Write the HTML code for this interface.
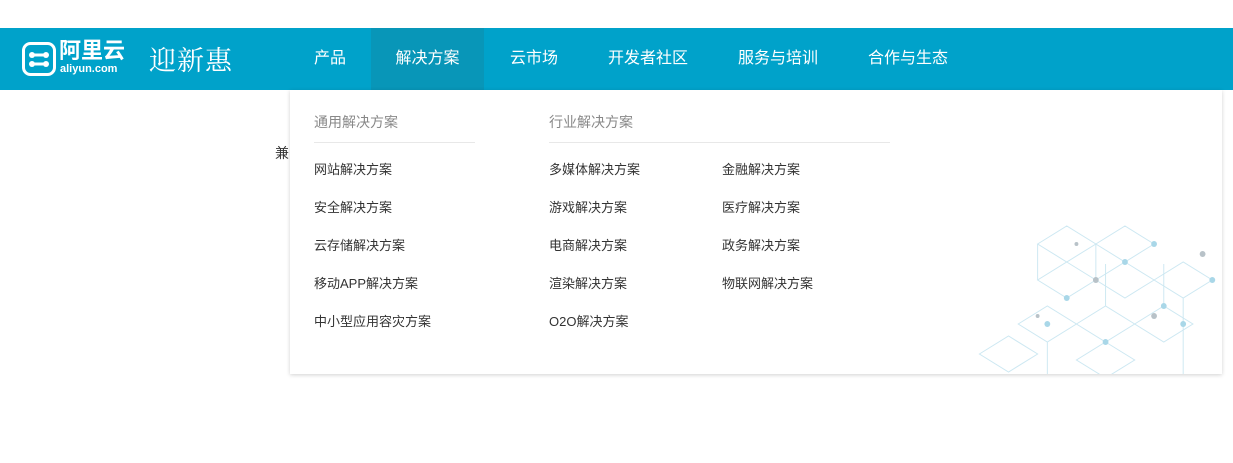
<!DOCTYPE html>
<html><head><meta charset="utf-8"><style>
*{margin:0;padding:0;box-sizing:border-box}
body{width:1233px;height:463px;background:#fff;position:relative;overflow:hidden;font-family:"Liberation Sans","Noto Sans CJK SC",sans-serif}
.bar{position:absolute;left:0;top:28px;width:1233px;height:62px;background:#00a2ca}
.nav{position:absolute;top:0;height:62px;line-height:62px;color:#fff;font-size:16px;text-align:center}
.act{background:#0896b8}
.dd{position:absolute;left:290px;top:90px;width:932px;height:284px;background:#fff;box-shadow:0 1px 4px rgba(0,0,0,.18)}
.h{position:absolute;top:22px;font-size:14px;color:#888}
.ln{position:absolute;top:52px;height:1px;background:#e8e8e8}
.it{position:absolute;font-size:13px;color:#333}
</style></head><body>
<div class="bar">
 <svg style="position:absolute;left:22px;top:14px" width="34" height="34" viewBox="0 0 34 34"><rect x="1.5" y="1.5" width="31" height="31" rx="7" fill="none" stroke="#fff" stroke-width="3"/><circle cx="10" cy="13" r="3" fill="#fff"/><circle cx="24" cy="13" r="3" fill="#fff"/><circle cx="10" cy="22" r="3" fill="#fff"/><circle cx="24" cy="22" r="3" fill="#fff"/><rect x="10" y="11.5" width="14" height="3" fill="#fff"/><rect x="10" y="20.5" width="14" height="3" fill="#fff"/></svg>
 <div style="position:absolute;left:59px;top:11px;color:#fff;font-size:22px;font-weight:bold;line-height:24px">阿里云</div>
 <div style="position:absolute;left:60px;top:35px;color:#fff;font-size:11px;font-weight:bold;line-height:12px">aliyun.com</div>
 <div style="position:absolute;left:149px;top:14px;color:#fff;font-size:27px;line-height:34px;letter-spacing:1px;font-family:'Noto Serif CJK SC',serif">迎新惠</div>
 <div class="nav" style="left:300px;width:60px">产品</div>
 <div class="nav act" style="left:371px;width:113px">解决方案</div>
 <div class="nav" style="left:500px;width:68px">云市场</div>
 <div class="nav" style="left:598px;width:100px">开发者社区</div>
 <div class="nav" style="left:728px;width:100px">服务与培训</div>
 <div class="nav" style="left:858px;width:100px">合作与生态</div>
</div>
<div style="position:absolute;left:275px;top:143px;font-size:14px;color:#333">兼</div>
<div class="dd">
 <svg style="position:absolute;right:0;bottom:0" width="262" height="170" viewBox="0 0 270 170" preserveAspectRatio="none">
  <g stroke="#cde8f2" fill="none" stroke-width="1">
   <path d="M80 40 L110 22 L140 40 L110 58Z M140 40 L170 22 L200 40 L170 58Z M110 58 L140 76 L110 94 L80 76Z M170 58 L200 76 L170 94 L140 76Z M200 76 L230 58 L260 76 L230 94Z M60 120 L90 102 L120 120 L90 138Z M120 120 L150 102 L180 120 L150 138Z M180 120 L210 102 L240 120 L210 138Z M150 138 L180 156 L150 174 L120 156Z M90 138 L90 170 M150 102 L150 60 M210 102 L210 60 M230 94 L230 170 M80 40 L80 76 M140 40 L140 76 M20 150 L50 132 L80 150 L50 168Z"/>
  </g>
  <g fill="#a9d7e8"><circle cx="170" cy="58" r="3"/><circle cx="110" cy="94" r="3"/><circle cx="210" cy="102" r="3"/><circle cx="150" cy="138" r="3"/><circle cx="260" cy="76" r="3"/><circle cx="90" cy="120" r="3"/><circle cx="230" cy="120" r="3"/><circle cx="200" cy="40" r="3"/></g>
  <g fill="#b8c2c8"><circle cx="140" cy="76" r="3"/><circle cx="250" cy="50" r="3"/><circle cx="200" cy="112" r="3"/><circle cx="80" cy="112" r="2"/><circle cx="120" cy="40" r="2"/></g>
 </svg>
 <div class="h" style="left:24px">通用解决方案</div><div class="ln" style="left:24px;width:161px"></div>
 <div class="h" style="left:259px">行业解决方案</div><div class="ln" style="left:259px;width:341px"></div>
 <div class="it" style="left:24px;top:69px">网站解决方案</div>
 <div class="it" style="left:24px;top:107px">安全解决方案</div>
 <div class="it" style="left:24px;top:145px">云存储解决方案</div>
 <div class="it" style="left:24px;top:183px">移动APP解决方案</div>
 <div class="it" style="left:24px;top:221px">中小型应用容灾方案</div>
 <div class="it" style="left:259px;top:69px">多媒体解决方案</div>
 <div class="it" style="left:259px;top:107px">游戏解决方案</div>
 <div class="it" style="left:259px;top:145px">电商解决方案</div>
 <div class="it" style="left:259px;top:183px">渲染解决方案</div>
 <div class="it" style="left:259px;top:221px">O2O解决方案</div>
 <div class="it" style="left:432px;top:69px">金融解决方案</div>
 <div class="it" style="left:432px;top:107px">医疗解决方案</div>
 <div class="it" style="left:432px;top:145px">政务解决方案</div>
 <div class="it" style="left:432px;top:183px">物联网解决方案</div>
</div>
</body></html>
